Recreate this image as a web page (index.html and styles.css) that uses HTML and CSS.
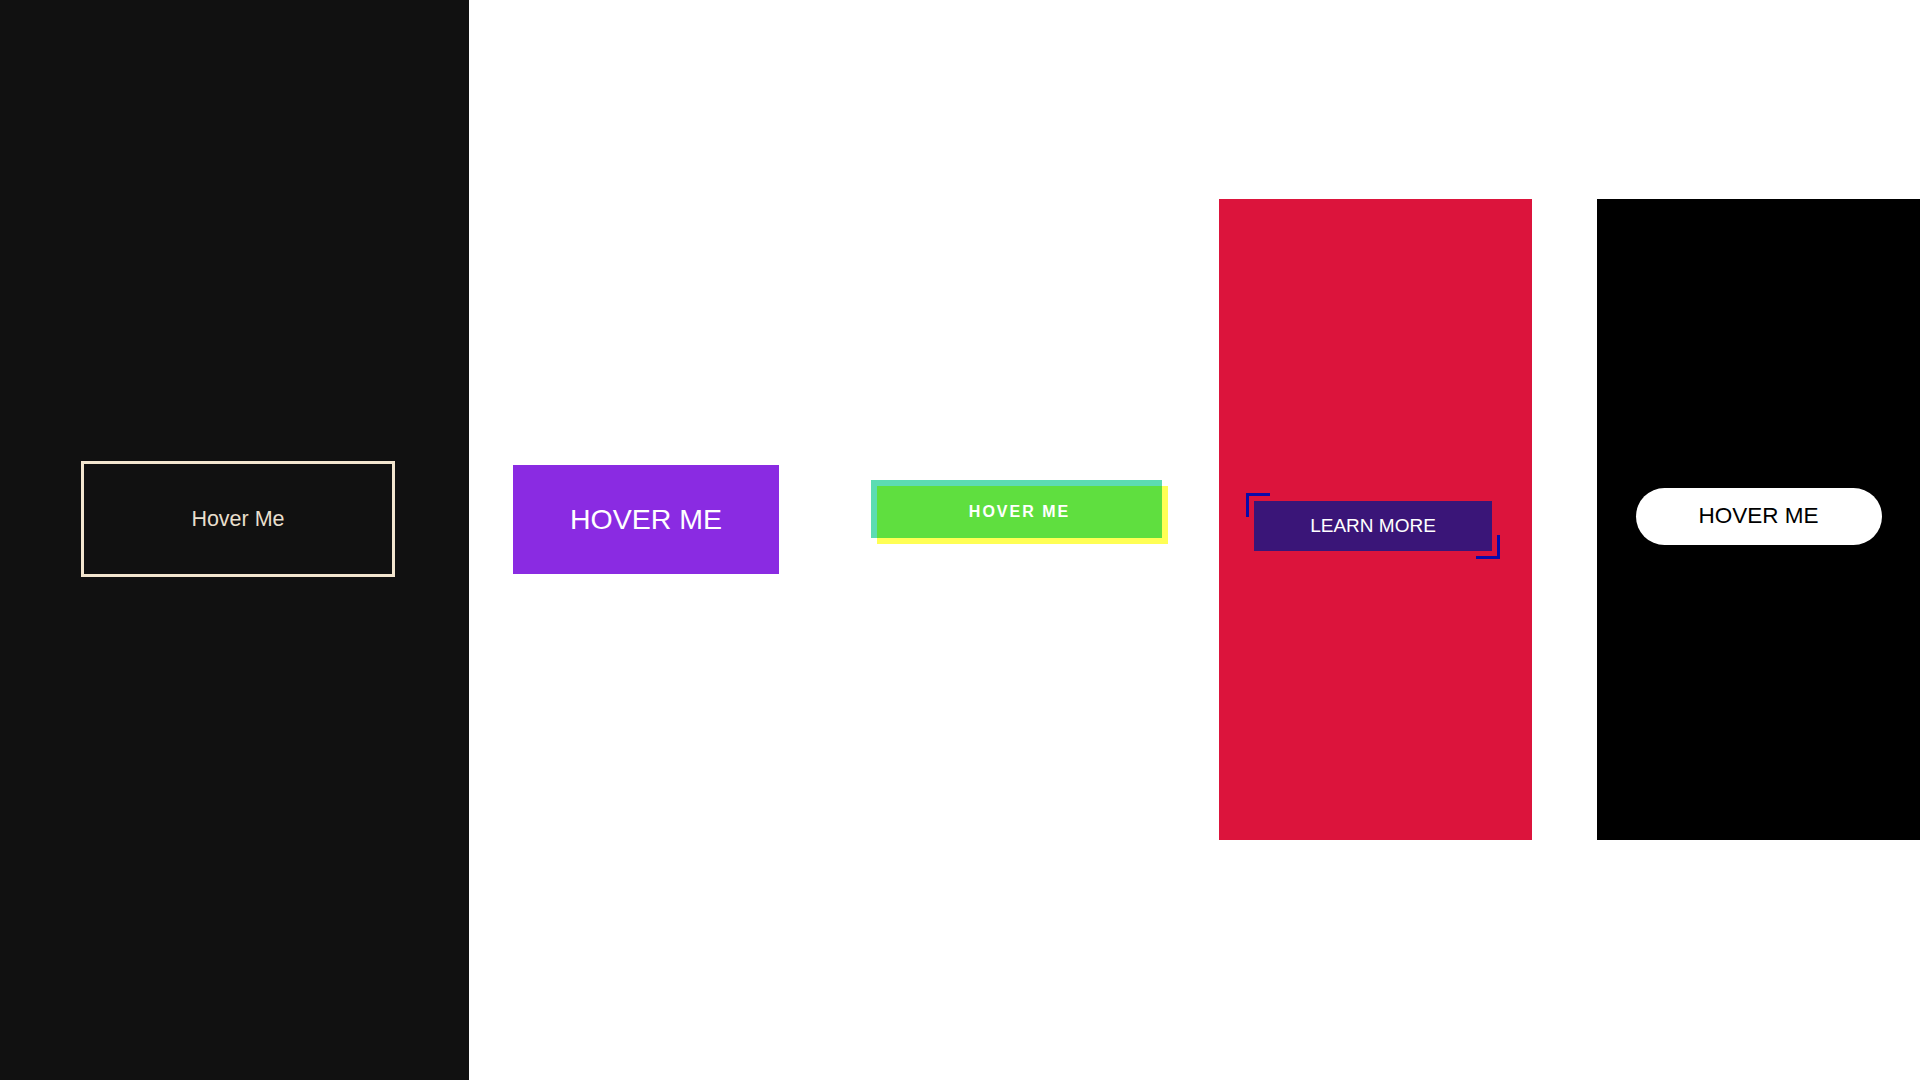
FILE: index.html
```html
<!DOCTYPE html>
<html lang="en">
<head>
    <meta charset="utf-8">
    <title>Button Hover Effects</title>
    <link rel="stylesheet" href="styles.css">
</head>
<body>
    <div class="dark-side">
        <button class="outline-button">Hover Me</button>
    </div>

    <div class="light-side">
        <div class="slot slot-purple">
            <button class="purple-button">HOVER ME</button>
        </div>

        <div class="slot slot-glitch">
            <button class="glitch-button">HOVER ME</button>
        </div>

        <div class="red-card">
            <div class="corner-wrap">
                <span class="corner corner-top"></span>
                <button class="learn-button">LEARN MORE</button>
                <span class="corner corner-bottom"></span>
            </div>
        </div>

        <div class="black-card">
            <button class="pill-button">HOVER ME</button>
        </div>
    </div>
</body>
</html>
```

FILE: styles.css
```css
* {
    box-sizing: border-box;
}

html, body {
    margin: 0;
    height: 100%;
}

body {
    display: flex;
    font-family: "Liberation Sans", Arial, sans-serif;
    background-color: #fff;
}

button {
    font-family: inherit;
    border: none;
    cursor: pointer;
}

.dark-side {
    width: 469px;
    height: 1080px;
    background-color: #111111;
    display: flex;
    align-items: center;
    justify-content: center;
    padding-left: 7px;
    padding-bottom: 42px;
}

.outline-button {
    width: 314px;
    height: 116px;
    background: transparent;
    border: 3px solid #f3e6cf;
    color: #e8dfcd;
    font-size: 21.5px;
}

.light-side {
    flex: 1;
    display: flex;
    align-items: center;
    padding-bottom: 42px;
}

.slot-purple {
    margin-left: 44px;
}

.purple-button {
    width: 266px;
    height: 109px;
    background-color: #8a2be2;
    color: #fff;
    font-size: 28.5px;
}

.slot-glitch {
    margin-left: 92px;
    margin-bottom: 14px;
    width: 297px;
    height: 64px;
    padding: 6px;
}

.glitch-button {
    display: block;
    width: 285px;
    height: 52px;
    background-color: #5fdf3f;
    color: #fff;
    font-size: 16px;
    font-weight: bold;
    letter-spacing: 2px;
    box-shadow:
        -6px -6px 0 #5cdcb2,
        0 -6px 0 #5cdcb2,
        -6px 0 0 #5cdcb2,
        6px 6px 0 #ffff55,
        0 6px 0 #ffff55,
        6px 0 0 #ffff55;
}

.red-card {
    margin-left: 51px;
    width: 313px;
    height: 641px;
    background-color: #dc143c;
    display: flex;
    align-items: center;
    justify-content: center;
    padding-top: 14px;
    padding-right: 5px;
}

.corner-wrap {
    position: relative;
    padding: 8px;
}

.learn-button {
    display: block;
    width: 238px;
    height: 50px;
    background-color: #3a1578;
    color: #fff;
    font-size: 19px;
}

.corner {
    position: absolute;
    width: 24px;
    height: 24px;
    border: 0 solid #0a0aa8;
}

.corner-top {
    top: 0;
    left: 0;
    border-top-width: 3px;
    border-left-width: 3px;
}

.corner-bottom {
    right: 0;
    bottom: 0;
    border-bottom-width: 3px;
    border-right-width: 3px;
}

.black-card {
    margin-left: 65px;
    flex: 1;
    height: 641px;
    background-color: #000;
    display: flex;
    align-items: center;
    justify-content: center;
    padding-bottom: 6px;
}

.pill-button {
    width: 246px;
    height: 57px;
    border-radius: 29px;
    background-color: #fff;
    color: #000;
    font-size: 22.5px;
}
```
